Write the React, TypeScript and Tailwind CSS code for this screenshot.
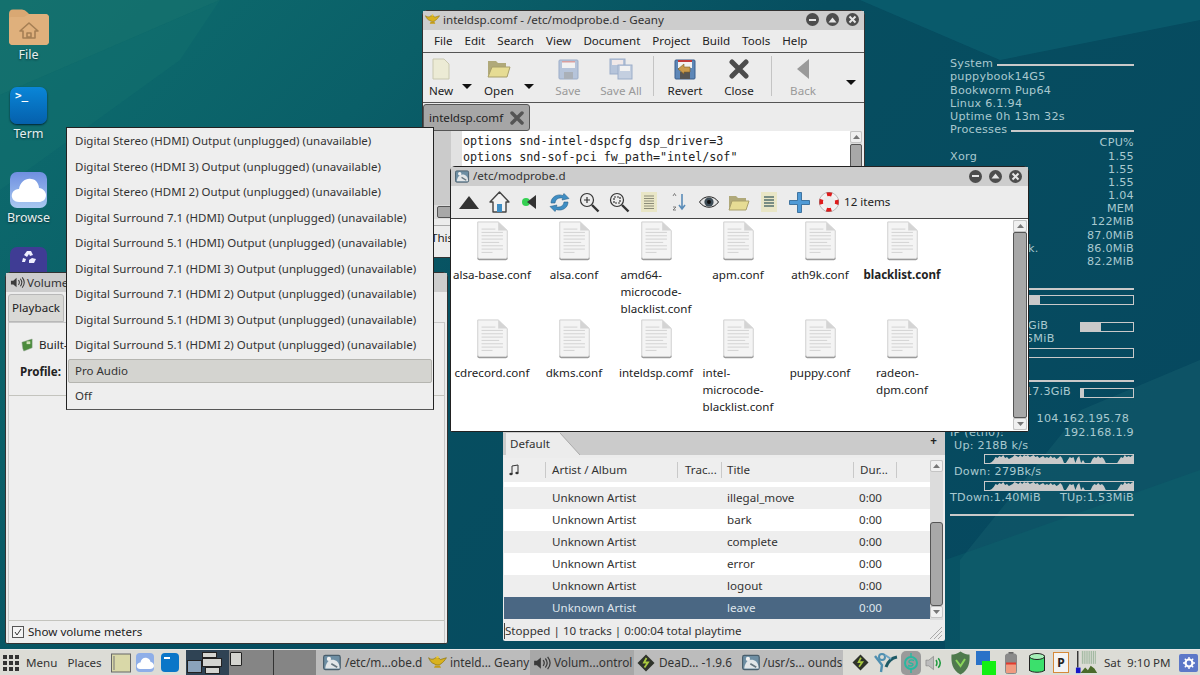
import React from "react";

const ui = "font-['Noto_Sans','Open_Sans',sans-serif]";

function WinButtons() {
  return (
    <div className="flex items-center gap-[7px]">
      <span className="flex h-[13px] w-[13px] items-center justify-center rounded-full bg-[#4d4d4d]">
        <span className="h-[2px] w-[7px] bg-[#e6e6e6]" />
      </span>
      <span className="flex h-[13px] w-[13px] items-center justify-center rounded-full bg-[#4d4d4d]">
        <svg width="9" height="6" viewBox="0 0 9 6">
          <path d="M0.5 5.5 L4.5 0.5 L8.5 5.5 Z" fill="#e6e6e6" />
        </svg>
      </span>
      <span className="flex h-[13px] w-[13px] items-center justify-center rounded-full bg-[#4d4d4d]">
        <svg width="9" height="9" viewBox="0 0 9 9">
          <path d="M1.5 1.5 L7.5 7.5 M7.5 1.5 L1.5 7.5" stroke="#e6e6e6" strokeWidth="2" />
        </svg>
      </span>
    </div>
  );
}

function GeanyLamp({ size = 16 }: { size?: number }) {
  return (
    <svg width={size} height={size} viewBox="0 0 16 16" className="shrink-0">
      <path d="M0.5 4 C3 6 4 5 5 5 C6 3.5 9 3.5 10.5 5.5 L15.5 4 C14 6.5 12.5 8 11 9 C10 10.5 7 10.5 5 9 C3 8.5 1.5 6.5 0.5 4 Z" fill="#d9b21f" stroke="#8c7310" strokeWidth="0.6" />
      <path d="M5 12.5 H11 L10 10.5 H6 Z" fill="#c49c18" />
      <circle cx="8" cy="3.5" r="1" fill="#e8c83a" />
    </svg>
  );
}

function FmIcon({ size = 16 }: { size?: number }) {
  return (
    <svg width={size} height={size} viewBox="0 0 16 16" className="shrink-0">
      <rect x="0.5" y="2" width="14" height="12" rx="1.5" fill="#6d8ea3" stroke="#4a5f6d" />
      <path d="M2 12 C3 7 6 5 10 6 C13 7 14 10 14 13 H2 Z" fill="#e2e6e8" />
      <circle cx="5" cy="5" r="1.8" fill="#f1f1f1" />
      <path d="M7 9 L12 12" stroke="#66767f" strokeWidth="1.4" />
    </svg>
  );
}

function SpeakerIcon({ size = 16 }: { size?: number }) {
  return (
    <svg width={size} height={size} viewBox="0 0 16 16" fill="none" className="shrink-0">
      <path d="M1 6 H3.5 L7 3 V13 L3.5 10 H1 Z" fill="#3b3b3b" />
      <path d="M9 5.5 C10.2 7 10.2 9 9 10.5 M11 4 C13 6.5 13 9.5 11 12 M13 2.5 C15.8 6 15.8 10 13 13.5" stroke="#3b3b3b" strokeWidth="1.1" />
    </svg>
  );
}

function DeadbeefIcon({ size = 18 }: { size?: number }) {
  return (
    <svg width={size} height={size} viewBox="0 0 18 18" className="shrink-0">
      <path d="M9 0.5 L17.5 9 L9 17.5 L0.5 9 Z" fill="#2f332b" />
      <path d="M9.5 4 L7 8.5 H11 L7.5 13.5" stroke="#a9c93f" strokeWidth="1.8" fill="none" />
    </svg>
  );
}

function DocIcon() {
  return (
    <svg width="33" height="40" viewBox="0 0 34 42">
      <path d="M1.5 1 H23 L32.5 10 V38 Q32.5 39.5 31 39.5 H3 Q1.5 39.5 1.5 38 Z" fill="#f4f4f4" stroke="#cfcfcf" />
      <path d="M1.5 38.5 Q1.5 40.5 3 40.5 H31 Q32.5 40.5 32.5 38.5" fill="none" stroke="#9a9a9a" strokeWidth="1.2" />
      <path d="M23 1 V10 H32.5 Z" fill="#d4d4d4" />
      <path d="M5.5 8.5 H20 M5.5 12 H28 M5.5 15.5 H28 M5.5 19 H28 M5.5 22.5 H24 M5.5 26 H28 M5.5 29.5 H28 M5.5 33 H17" stroke="#d2d2d2" strokeWidth="1" />
    </svg>
  );
}

function ScrollUp() {
  return (
    <div className="flex h-[12px] shrink-0 items-center justify-center rounded-[2px] border border-[#c4c4c4] bg-[#f0f0f0]">
      <svg width="7" height="4" viewBox="0 0 7 4">
        <path d="M0 4 L3.5 0 L7 4 Z" fill="#777" />
      </svg>
    </div>
  );
}

function ScrollDown() {
  return (
    <div className="flex h-[12px] shrink-0 items-center justify-center rounded-[2px] border border-[#c4c4c4] bg-[#f0f0f0]">
      <svg width="7" height="4" viewBox="0 0 7 4">
        <path d="M0 0 L3.5 4 L7 0 Z" fill="#777" />
      </svg>
    </div>
  );
}

function Desktop() {
  return (
    <div className="absolute left-0 top-0 flex w-[57px] flex-col items-center text-[12.5px] text-[#e6f0f0] [text-shadow:0_1px_2px_#0a3036] font-['Noto_Sans',sans-serif]">
      <svg className="mt-[8px]" width="42" height="38" viewBox="0 0 42 38">
        <path d="M1 6 Q1 1.5 5 1.5 H14 Q17 1.5 19 4 L21 6 H37 Q41 6 41 10 V33 Q41 37 37 37 H5 Q1 37 1 33 Z" fill="#d9a873" />
        <path d="M1 11 Q1 9 3 9 H16 L21 6 H37 Q41 6 41 10 V33 Q41 37 37 37 H5 Q1 37 1 33 Z" fill="#dfb07c" />
        <path d="M21 15 L12 23 H15 V30 H27 V23 H30 Z M19 25 H23 V29 H19 Z" fill="none" stroke="#a57f54" strokeWidth="1.6" strokeLinejoin="round" />
      </svg>
      <span className="leading-[18px]">File</span>
      <span className="mt-[23px] flex h-[37px] w-[37px] rounded-[7px] bg-gradient-to-b from-[#0a86d8] to-[#0560ac] shadow-[0_1px_2px_#023]">
        <span className="ml-[5px] mt-[2px] font-['DejaVu_Sans_Mono',monospace] text-[11px] font-bold leading-[14px] text-white [text-shadow:none]">&gt;_</span>
      </span>
      <span className="mt-[1px] leading-[18px]">Term</span>
      <span className="mt-[29px] flex h-[36px] w-[37px] items-center justify-center rounded-[7px] bg-gradient-to-b from-[#6f8fe0] to-[#a9c8f0]">
        <svg width="35" height="28" viewBox="0 0 35 28">
          <path d="M8 26 C2 26 0 21 1 18 C2 14 6 13 8 13 C9 6 15 2 20 3 C25 3 28 8 28 12 C32 12 35 16 35 19 C35 24 31 26 28 26 Z" fill="#fff" />
        </svg>
      </span>
      <span className="mt-[1px] leading-[18px]">Browse</span>
      <span className="mt-[20px] flex h-[37px] w-[37px] justify-center rounded-[7px] bg-[#3f3c94]">
        <svg className="mt-[3px]" width="16" height="14" viewBox="0 0 16 14">
          <path d="M6 1 H10 L12 5 L9 6 L8 4 L6 7 L3 5 Z M2 8 L5 9 L4 12 H1 Z M11 8 L15 9 L13 13 H8 V10 Z" fill="#eef" />
        </svg>
      </span>
    </div>
  );
}

function Rule({ label }: { label: string }) {
  return (
    <div className="flex h-[13.2px] items-center gap-[4px]">
      <span>{label}</span>
      <span className="h-[2px] flex-1 bg-[#c9c9c9]" />
    </div>
  );
}

function Row({ left, right }: { left?: string; right?: string }) {
  return (
    <div className="flex h-[13.2px] items-center justify-between">
      <span>{left}</span>
      <span>{right}</span>
    </div>
  );
}

const graphHeights = [0,0,1,3,6,5,7,6,8,5,6,4,5,6,8,7,6,8,6,8,7,8,6,7,8,6,7,5,6,7,5,6,5,7,5,6,4,5,7,5,0,0,3,6,5,6,0,5,7,0,3,0,0,0,0,4,6,5,7,5,6,4,0,0,0,0,0,0,0,3,6,5,8,6,7,6,8,5];

function NetGraph() {
  return (
    <div className="ml-[34px] h-[10px] border border-[#c9c9c9]">
      <svg width="148" height="8" viewBox="0 0 148 8" className="block">
        <path d={"M3 8 " + graphHeights.map((h, i) => `L${i * 1.9 + 3} ${8 - h}`).join(" ") + " L148 8 Z"} fill="#c9c9c9" />
      </svg>
    </div>
  );
}

function Conky() {
  return (
    <div className="absolute left-[950px] top-[58px] flex w-[184px] flex-col font-['DejaVu_Sans',sans-serif] text-[11.2px] tracking-[0.25px] text-[#a9c9cf]">
      <Rule label="System" />
      <Row left="puppybook14G5" />
      <Row left="Bookworm Pup64" />
      <Row left="Linux 6.1.94" />
      <Row left="Uptime 0h 13m 32s" />
      <Rule label="Processes" />
      <Row right="CPU%" />
      <Row left="Xorg" right="1.55" />
      <Row right="1.55" />
      <Row right="1.55" />
      <Row right="1.04" />
      <Row right="MEM" />
      <Row right="122MiB" />
      <Row right="87.0MiB" />
      <div className="flex h-[13.2px] items-center justify-between pl-[78px]">
        <span>k.</span>
        <span>86.0MiB</span>
      </div>
      <Row right="82.2MiB" />
      <div className="mt-[19px] h-[2px] bg-[#c9c9c9]" />
      <div className="mt-[5px] h-[10px] border border-[#c9c9c9]">
        <div className="h-full w-[89px] bg-[#c9c9c9]" />
      </div>
      <div className="mt-[15px] flex h-[13.2px] items-center pl-[78px]">
        <span className="w-[52px]">GiB</span>
        <span className="h-[10px] w-[54px] border border-[#c9c9c9]">
          <span className="block h-full w-[20px] bg-[#c9c9c9]" />
        </span>
      </div>
      <div className="flex h-[13.2px] items-center pl-[76px]">5MiB</div>
      <div className="mt-[1.6px] h-[10px] border border-[#c9c9c9]" />
      <div className="mt-[22px] h-[2px] bg-[#c9c9c9]" />
      <div className="mt-[5.8px] flex h-[10px] items-center">
        <span className="flex w-[130px] justify-end pr-[9px]">17.3GiB</span>
        <span className="h-[10px] w-[54px] border border-[#c9c9c9]">
          <span className="block h-full w-[3px] bg-[#c9c9c9]" />
        </span>
      </div>
      <div className="mt-[15.4px] flex h-[13.2px] items-center justify-end pr-[5px]">104.162.195.78</div>
      <Row left="IP (eth0):" right="192.168.1.9" />
      <div className="ml-[4px] flex h-[13.2px] items-center">Up: 218B k/s</div>
      <div className="mt-[1px]"><NetGraph /></div>
      <div className="ml-[4px] mt-[2.4px] flex h-[13.2px] items-center">Down: 279Bk/s</div>
      <div className="mt-[1.4px]"><NetGraph /></div>
      <div className="mt-[1.4px]"><Row left="TDown:1.40MiB" right="TUp:1.53MiB" /></div>
      <div className="mt-[8.4px] h-[2px] bg-[#c9c9c9]" />
    </div>
  );
}

const menuRows = [
  "Digital Stereo (HDMI) Output (unplugged) (unavailable)",
  "Digital Stereo (HDMI 3) Output (unplugged) (unavailable)",
  "Digital Stereo (HDMI 2) Output (unplugged) (unavailable)",
  "Digital Surround 7.1 (HDMI) Output (unplugged) (unavailable)",
  "Digital Surround 5.1 (HDMI) Output (unplugged) (unavailable)",
  "Digital Surround 7.1 (HDMI 3) Output (unplugged) (unavailable)",
  "Digital Surround 7.1 (HDMI 2) Output (unplugged) (unavailable)",
  "Digital Surround 5.1 (HDMI 3) Output (unplugged) (unavailable)",
  "Digital Surround 5.1 (HDMI 2) Output (unplugged) (unavailable)",
];

function ProfileMenu() {
  return (
    <div className={`absolute left-[66px] top-[127px] flex h-[283px] w-[368px] flex-col border border-[#222] border-b-[#555] bg-[#eeeeee] px-[1px] text-[11.5px] text-[#333] ${ui}`}>
      {menuRows.map((r) => (
        <div key={r} className="flex h-[25.5px] items-center whitespace-nowrap pl-[7px]">{r}</div>
      ))}
      <div className="mt-[1.5px] flex h-[24px] items-center rounded-[2px] border border-[#b5b5b0] bg-[#d4d4d0] pl-[6px]">Pro Audio</div>
      <div className="flex h-[26px] items-center pl-[7px]">Off</div>
    </div>
  );
}

function VolumeWindow() {
  return (
    <div className={`absolute left-[5px] top-[272px] flex h-[372px] w-[443px] flex-col rounded-t-[5px] rounded-b-[2px] border border-[#333] bg-[#ececec] text-[11.6px] text-[#222] ${ui}`}>
      <div className="flex h-[19px] shrink-0 items-center gap-[2px] bg-[#cdcdcd] pl-[4px] pr-[3px]">
        <SpeakerIcon size={15} />
        <span className="text-[#333]">Volume</span>
      </div>
      <div className="mx-[2px] flex h-[30px] shrink-0 items-end">
        <div className="flex h-[28px] w-[56px] items-center justify-center rounded-t-[3px] border border-[#b8b8b8] bg-[#d9d9d6]">Playback</div>
      </div>
      <div className="mx-[2px] flex flex-1 flex-col border-x border-t border-[#c8c8c8] bg-[#eeeeee]">
        <div className="ml-[12px] mt-[13px] flex h-[18px] items-center gap-[5px]">
          <svg width="13" height="15" viewBox="0 0 14 15">
            <path d="M1 4 L12 0.5 V10 L3 13.5 L2 11 Z" fill="#4b8c3c" stroke="#8a9a8a" strokeWidth="0.5" />
            <rect x="6" y="3" width="4" height="3" fill="#cfe2b8" />
          </svg>
          <span>Built-</span>
        </div>
        <div className="ml-[11px] mt-[8px] flex h-[20px] items-center font-bold">Profile:</div>
        <div className="mt-[13px] h-px bg-[#c4c4be]" />
        <div className="flex-1" />
        <div className="h-px bg-[#c4c4be]" />
        <div className="flex h-[22px] items-center gap-[4px] pl-[3px]">
          <span className="flex h-[12px] w-[12px] items-center justify-center border border-[#555] bg-[#f4f4f4]">
            <svg width="8" height="8" viewBox="0 0 8 8">
              <path d="M1 4 L3 7 L7 1" stroke="#333" fill="none" strokeWidth="1" />
            </svg>
          </span>
          <span>Show volume meters</span>
        </div>
      </div>
    </div>
  );
}

function Caret() {
  return <span className="h-0 w-0 border-x-[5px] border-t-[5px] border-x-transparent border-t-[#111]" />;
}

function ToolItem({ label, width, dim, children }: { label: string; width: string; dim?: boolean; children: React.ReactNode }) {
  return (
    <div className={`flex shrink-0 flex-col items-center whitespace-nowrap ${width}`}>
      <div className="flex h-[26px] items-center">{children}</div>
      <span className={`leading-[18px] ${dim ? "text-[#999]" : "text-[#222]"}`}>{label}</span>
    </div>
  );
}

function Floppy() {
  return (
    <svg width="21" height="21" viewBox="0 0 21 21">
      <rect x="1" y="1" width="19" height="19" rx="1" fill="#b6c4da" stroke="#9badc9" />
      <rect x="4" y="2" width="13" height="7" fill="#f2f2f2" />
      <rect x="4" y="2" width="13" height="1.5" fill="#d9a0a0" />
      <rect x="6" y="13" width="9" height="7" fill="#aab0b8" />
    </svg>
  );
}

function GeanyWindow() {
  return (
    <div className={`absolute left-[422px] top-[10px] flex h-[248px] w-[443px] flex-col rounded-t-[5px] border border-[#333] bg-[#ececec] text-[11.6px] text-[#222] ${ui}`}>
      <div className="flex h-[19px] shrink-0 items-center bg-[#cdcdcd] pb-[2px] pl-[2px] pr-[5px]">
        <GeanyLamp size={15} />
        <span className="ml-[3px] flex-1 text-[#333]">inteldsp.comf - /etc/modprobe.d - Geany</span>
        <WinButtons />
      </div>
      <div className="flex h-[23px] shrink-0 items-center gap-[12px] border-b border-[#555] pl-[11px]">
        {["File", "Edit", "Search", "View", "Document", "Project", "Build", "Tools", "Help"].map((m) => (
          <span key={m}>{m}</span>
        ))}
      </div>
      <div className="flex h-[50px] shrink-0 items-start border-b border-[#555] pt-[3px]">
        <ToolItem label="New" width="w-[36px]">
          <svg width="18" height="22" viewBox="0 0 18 22">
            <path d="M1 1 H12 L17 6 V21 H1 Z" fill="#ecebd5" stroke="#c9c8b0" />
          </svg>
        </ToolItem>
        <div className="flex h-[33px] w-[16px] shrink-0 items-end justify-center"><Caret /></div>
        <ToolItem label="Open" width="w-[48px]">
          <svg width="24" height="20" viewBox="0 0 24 20">
            <path d="M1 17 V2 H9 L11 4 H19 V8 H6 Z" fill="#b0a97a" />
            <path d="M1 18 L5 8 H23 L20 18 Z" fill="#e6dc94" stroke="#a89f6a" />
          </svg>
        </ToolItem>
        <div className="flex h-[33px] w-[12px] shrink-0 items-end justify-center"><Caret /></div>
        <ToolItem label="Save" width="w-[66px]" dim><Floppy /></ToolItem>
        <ToolItem label="Save All" width="w-[40px]" dim>
          <svg width="24" height="22" viewBox="0 0 24 22">
            <rect x="1" y="1" width="15" height="15" fill="#b6c4da" stroke="#9badc9" />
            <rect x="3" y="2" width="11" height="5" fill="#f0e8e8" />
            <rect x="9" y="7" width="14" height="14" fill="#c4cfe0" stroke="#9badc9" />
            <rect x="11" y="8" width="10" height="5" fill="#f2f2f2" />
          </svg>
        </ToolItem>
        <span className="ml-[12px] mr-[6px] h-[40px] w-px shrink-0 bg-[#c4c4c4]" />
        <ToolItem label="Revert" width="w-[50px]">
          <svg width="22" height="21" viewBox="0 0 22 21">
            <rect x="1" y="1" width="20" height="19" rx="1" fill="#5d87b8" stroke="#3a5f8d" />
            <rect x="4" y="1" width="14" height="2" fill="#c03a3a" />
            <rect x="4" y="3" width="14" height="6" fill="#f2f2f2" />
            <rect x="6" y="13" width="10" height="7" fill="#555" />
            <path d="M4 10 L10 5 V8 H16 V13 H10 V15 Z" fill="#c99a4d" stroke="#7f5e25" strokeWidth="0.6" />
          </svg>
        </ToolItem>
        <ToolItem label="Close" width="w-[58px]">
          <svg width="20" height="20" viewBox="0 0 20 20">
            <path d="M3 3 L17 17 M17 3 L3 17" stroke="#4c4c4c" strokeWidth="5" strokeLinecap="round" />
          </svg>
        </ToolItem>
        <span className="ml-[3px] h-[40px] w-px shrink-0 bg-[#c4c4c4]" />
        <ToolItem label="Back" width="w-[62px]" dim>
          <svg width="13" height="20" viewBox="0 0 13 20">
            <path d="M12 0 V20 L0 10 Z" fill="#9a9a9a" />
          </svg>
        </ToolItem>
        <span className="flex-1" />
        <div className="flex h-[29px] w-[20px] shrink-0 items-end justify-center"><Caret /></div>
        <span className="w-[3px] shrink-0" />
      </div>
      <div className="flex h-[28px] shrink-0 items-end">
        <div className="flex h-[27px] w-[107px] items-center gap-[7px] rounded-[3px] border border-[#555] bg-[#a6a6a6] pl-[5px]">
          <span>inteldsp.comf</span>
          <svg width="14" height="14" viewBox="0 0 14 14">
            <path d="M2 2 L12 12 M12 2 L2 12" stroke="#555" strokeWidth="3.5" strokeLinecap="round" />
          </svg>
        </div>
      </div>
      <div className="flex min-h-0 flex-1">
        <div className="w-[28px] bg-[#cbcbcb]" />
        <div className="w-[11px] bg-[#e2e2e2]" />
        <div className="flex-1 bg-white pl-px pt-[2px] font-['DejaVu_Sans_Mono',monospace] text-[11.7px] leading-[16.4px] text-[#222]">
          <div>options snd-intel-dspcfg dsp_driver=3</div>
          <div>options snd-sof-pci fw_path="intel/sof"</div>
        </div>
        <div className="mr-[2px] flex w-[12px] flex-col bg-[#dcdcdc]">
          <ScrollUp />
          <div className="mt-px h-[24px] rounded-[2px] border border-[#555] bg-[#a8a8a8]" />
        </div>
      </div>
      <div className="flex h-[14px] shrink-0 items-center bg-[#dcdcdc]">
        <div className="ml-[14px] h-[12px] w-[60px] rounded-[2px] border border-[#555] bg-[#a8a8a8]" />
      </div>
      <div className="mt-[6px] flex h-[32px] shrink-0 items-start border-t border-[#aaa] pl-[8px] pt-[3px]">This is Geany</div>
    </div>
  );
}

const fmFiles = [
  ["alsa-base.conf"],
  ["alsa.conf"],
  ["amd64-", "microcode-", "blacklist.conf"],
  ["apm.conf"],
  ["ath9k.conf"],
  ["blacklist.conf"],
  ["cdrecord.conf"],
  ["dkms.conf"],
  ["inteldsp.comf"],
  ["intel-", "microcode-", "blacklist.conf"],
  ["puppy.conf"],
  ["radeon-", "dpm.conf"],
];

function FmTool({ children }: { children: React.ReactNode }) {
  return <div className="flex w-[30px] shrink-0 items-center justify-center">{children}</div>;
}

function FileManager() {
  return (
    <div className={`absolute left-[450px] top-[166px] flex h-[266px] w-[579px] flex-col rounded-t-[5px] rounded-b-[2px] border border-[#222] bg-[#ececec] text-[11.6px] text-[#222] ${ui}`}>
      <div className="flex h-[19px] shrink-0 items-center bg-[#cdcdcd] pb-[1px] pl-[4px] pr-[6px]">
        <FmIcon size={15} />
        <span className="ml-[3px] flex-1 text-[#333]">/etc/modprobe.d</span>
        <WinButtons />
      </div>
      <div className="flex h-[33px] shrink-0 items-center border-b border-[#444] pl-[3px]">
        <FmTool>
          <svg width="20" height="13" viewBox="0 0 20 13"><path d="M10 0 L20 13 H0 Z" fill="#333" /></svg>
        </FmTool>
        <FmTool>
          <svg width="21" height="22" viewBox="0 0 21 22">
            <path d="M10.5 1 L1 11 H4 V21 H17 V11 H20 Z" fill="#f2f2f2" stroke="#444" strokeWidth="1.4" strokeLinejoin="round" />
            <rect x="8" y="13" width="5" height="8" fill="#3f8ec4" />
          </svg>
        </FmTool>
        <FmTool>
          <svg width="16" height="16" viewBox="0 0 16 16">
            <circle cx="5" cy="8" r="4" fill="#35d052" />
            <path d="M15 1 V15 L6 8 Z" fill="#333" />
          </svg>
        </FmTool>
        <FmTool>
          <svg width="21" height="21" viewBox="0 0 21 21" fill="none">
            <path d="M2 11 C2 5 8 1.5 14 3.5 L15 1.5 L20 6.5 L13 8 L13.8 6.3 C10 5 6.5 7 6 11 Z" fill="#3f8ec4" stroke="#29628a" strokeWidth="0.6" />
            <path d="M19 10 C19 16 13 19.5 7 17.5 L6 19.5 L1 14.5 L8 13 L7.2 14.7 C11 16 14.5 14 15 10 Z" fill="#3f8ec4" stroke="#29628a" strokeWidth="0.6" />
          </svg>
        </FmTool>
        <FmTool>
          <svg width="21" height="21" viewBox="0 0 21 21" fill="none">
            <circle cx="8" cy="8" r="6.5" stroke="#333" strokeWidth="1.2" />
            <path d="M8 5 V11 M5 8 H11" stroke="#333" strokeWidth="1.2" />
            <path d="M13 13 L19.5 19.5" stroke="#333" strokeWidth="2.4" />
          </svg>
        </FmTool>
        <FmTool>
          <svg width="21" height="21" viewBox="0 0 21 21" fill="none">
            <circle cx="8" cy="8" r="6.5" stroke="#333" strokeWidth="1.2" />
            <rect x="5" y="5" width="6" height="6" stroke="#333" strokeWidth="1.2" strokeDasharray="2 1" />
            <path d="M13 13 L19.5 19.5" stroke="#333" strokeWidth="2.4" />
          </svg>
        </FmTool>
        <FmTool>
          <svg width="16" height="20" viewBox="0 0 16 20">
            <rect width="16" height="20" fill="#e9e6c6" />
            <path d="M3 4 H13 M3 6.5 H13 M3 9 H13 M3 11.5 H13 M3 14 H13 M3 16.5 H13" stroke="#8c8c78" />
          </svg>
        </FmTool>
        <FmTool>
          <svg width="14" height="18" viewBox="0 0 14 18">
            <path d="M10 1 V15 M7 12 L10 16 L13 12" stroke="#5a8cb8" strokeWidth="1.6" fill="none" />
            <path d="M1 3 L2.5 0.5 L4 3 M1 14 H4 L1 17 H4" stroke="#666" strokeWidth="0.8" fill="none" />
          </svg>
        </FmTool>
        <FmTool>
          <svg width="20" height="14" viewBox="0 0 20 14">
            <path d="M0.5 7 C5 0 15 0 19.5 7 C15 14 5 14 0.5 7 Z" fill="#e4e4e4" stroke="#222" />
            <circle cx="10" cy="7" r="4.6" fill="#3c4b55" />
            <circle cx="10" cy="7" r="2" fill="#111" />
          </svg>
        </FmTool>
        <FmTool>
          <svg width="22" height="17" viewBox="0 0 22 17">
            <path d="M1 15 V2 H8 L10 4 H18 V7 H5 Z" fill="#b0a97a" />
            <path d="M1 16 L4 7 H21 L18 16 Z" fill="#e6dc94" stroke="#a89f6a" />
          </svg>
        </FmTool>
        <FmTool>
          <svg width="16" height="20" viewBox="0 0 16 20">
            <rect width="16" height="20" fill="#e9e6c6" />
            <path d="M3 5 H13 M3 8 H13 M3 11 H13 M3 14 H13" stroke="#54706f" strokeWidth="1.4" />
          </svg>
        </FmTool>
        <FmTool>
          <svg width="21" height="21" viewBox="0 0 21 21">
            <path d="M8.5 0.5 H12.5 V8.5 H20.5 V12.5 H12.5 V20.5 H8.5 V12.5 H0.5 V8.5 H8.5 Z" fill="#4f9ad6" stroke="#27608f" strokeWidth="0.8" />
          </svg>
        </FmTool>
        <FmTool>
          <svg width="20" height="20" viewBox="0 0 20 20" fill="none">
            <circle cx="10" cy="10" r="8" stroke="#f2f2f2" strokeWidth="4" />
            <circle cx="10" cy="10" r="8" stroke="#e01a1a" strokeWidth="4" strokeDasharray="5 7.6" strokeDashoffset="2.5" />
            <circle cx="10" cy="10" r="9.7" stroke="#888" strokeWidth="0.5" />
          </svg>
        </FmTool>
        <span className="whitespace-nowrap">12 items</span>
      </div>
      <div className="flex min-h-0 flex-1 bg-white">
        <div className="grid flex-1 grid-cols-[repeat(6,82px)] grid-rows-[98px_98px] content-start pt-[2px]">
          {fmFiles.map((lines, i) => (
            <div key={i} className={`flex flex-col items-center ${i === 5 ? "font-bold" : ""}`}>
              <DocIcon />
              <div className="mt-[5px] flex flex-col whitespace-nowrap leading-[17px]">
                {lines.map((l) => <span key={l}>{l}</span>)}
              </div>
            </div>
          ))}
        </div>
        <div className="my-[1px] mr-[1px] flex w-[14px] flex-col bg-[#dcdcdc]">
          <ScrollUp />
          <div className="flex-1 rounded-[2px] border border-[#555] bg-[#a8a8a8]" />
          <ScrollDown />
        </div>
      </div>
    </div>
  );
}

const tracks = ["illegal_move", "bark", "complete", "error", "logout", "leave"];

function PlayerWindow() {
  return (
    <div className={`absolute left-[503px] top-[430px] flex h-[211px] w-[442px] flex-col rounded-b-[2px] bg-[#ececec] text-[11.6px] text-[#333] ${ui}`}>
      <div className="relative flex h-[25px] shrink-0 items-end bg-[#cbcbcb] pl-[3px]">
        <div className="flex h-[22px] w-[54px] items-center bg-[#ececec] pl-[4px]">Default</div>
        <svg width="20" height="22" viewBox="0 0 20 22" className="block">
          <path d="M0 0 L20 22 H0 Z" fill="#ececec" />
          <path d="M0 0 L20 22" stroke="#aaa" fill="none" />
        </svg>
        <span className="absolute right-[8px] top-[2px] font-bold text-[#222]">+</span>
      </div>
      <div className="flex min-h-0 flex-1 pl-[1px] pt-[3px]">
        <div className="flex min-w-0 flex-1 flex-col">
          <div className="flex h-[24px] shrink-0 items-center bg-[#eeeeee]">
            <div className="flex h-[16px] w-[42px] items-center border-r border-[#c9c9c9] pl-[5px]">
              <svg width="11" height="12" viewBox="0 0 11 12">
                <path d="M3 10 V2 L9 1 V8.5" stroke="#333" fill="none" strokeWidth="1" />
                <ellipse cx="2" cy="10" rx="1.7" ry="1.3" fill="#333" />
                <ellipse cx="8" cy="9" rx="1.7" ry="1.3" fill="#333" />
              </svg>
            </div>
            <div className="flex h-[16px] w-[132px] items-center border-r border-[#c9c9c9] pl-[6px]">Artist / Album</div>
            <div className="flex h-[16px] w-[44px] items-center border-r border-[#c9c9c9] pl-[7px]">Trac...</div>
            <div className="flex h-[16px] w-[132px] items-center border-r border-[#c9c9c9] pl-[5px]">Title</div>
            <div className="flex h-[16px] w-[43px] items-center border-r border-[#c9c9c9] pl-[6px]">Dur...</div>
          </div>
          <div className="h-[5px] shrink-0 bg-white" />
          {tracks.map((t, i) => (
            <div key={t} className={`flex h-[22px] shrink-0 items-center ${i === 5 ? "bg-[#4a6783] text-[#dfe6ec]" : i % 2 === 0 ? "bg-[#eeeeee]" : "bg-white"}`}>
              <span className="w-[48px]" />
              <span className="w-[175px]">Unknown Artist</span>
              <span className="w-[132px]">{t}</span>
              <span>0:00</span>
            </div>
          ))}
        </div>
        <div className="mr-[2px] mt-[2px] flex w-[13px] flex-col bg-[#dcdcdc]">
          <ScrollUp />
          <div className="h-[50px] shrink-0" />
          <div className="h-[84px] shrink-0 rounded-[3px] border border-[#555] bg-[#a8a8a8]" />
          <ScrollDown />
        </div>
      </div>
      <div className="relative flex h-[21px] shrink-0 items-center pl-[1px]">
        <span className="border-l border-[#444] leading-[16px]">Stopped | 10 tracks | 0:00:04 total playtime</span>
        <svg className="absolute bottom-[1px] right-[2px]" width="14" height="14" viewBox="0 0 14 14">
          <path d="M13 1 L1 13 M13 5 L5 13 M13 9 L9 13" stroke="#aaa" />
        </svg>
      </div>
    </div>
  );
}

function Taskbar() {
  return (
    <div className={`flex h-[26px] w-full items-stretch border-t border-[#e8e8e8] bg-[#dcdcd6] text-[11.6px] text-[#333] ${ui}`}>
      <div className="flex w-[186px] shrink-0 items-center pl-[3px]">
        <svg width="16" height="16" viewBox="0 0 16 16">
          <path d="M0 0h4v4H0zM6 0h4v4H6zM12 0h4v4h-4zM0 6h4v4H0zM6 6h4v4H6zM12 6h4v4h-4zM0 12h4v4H0zM6 12h4v4h-4zM12 12h4v4h-4z" fill="#333" />
        </svg>
        <span className="ml-[7px]">Menu</span>
        <span className="ml-[10px]">Places</span>
        <svg className="ml-[9px]" width="20" height="20" viewBox="0 0 20 20">
          <rect x="0.5" y="1" width="19" height="18" fill="#d9d8a8" stroke="#666" />
          <path d="M3 3 V17" stroke="#777" />
        </svg>
        <svg className="ml-[5px]" width="18" height="19" viewBox="0 0 18 19">
          <rect width="18" height="19" rx="4" fill="#8eaee8" />
          <path d="M4 16 C1 16 0 13 1.5 11 C2.5 9.5 4 9.5 4.5 9.5 C5 6 8 4 11 5 C13.5 5.5 14.5 8 14.5 9 C16.5 9 18 11 18 13 C18 15 16 16 14 16 Z" fill="#fff" />
        </svg>
        <span className="ml-[7px] flex h-[19px] w-[18px] rounded-[4px] bg-[#0a76c8]">
          <span className="ml-[3px] mt-[4px] h-[2px] w-[6px] bg-white" />
        </span>
      </div>
      <div className="relative w-[43px] shrink-0 bg-[#2f4354]">
        <div className="flex h-full flex-col items-end pr-[7px] pt-[2px]">
          <span className="mr-[5px] h-[6px] w-[15px] border border-[#222] bg-[#d4d4d0]" />
          <span className="h-[9px] w-[20px] border border-[#222] bg-[#d4d4d0]" />
          <span className="mr-[2px] h-[7px] w-[15px] border border-[#222] bg-[#d4d4d0]" />
        </div>
        <span className="absolute bottom-[2px] left-[1px] h-[13px] w-[15px] border border-[#222] bg-[#8ba3bb]" />
      </div>
      <div className="flex w-[87px] shrink-0 bg-[#858585]">
        <span className="ml-[1px] mt-[2px] h-[14px] w-[12px] rounded-[1px] border border-[#222] bg-[#d4d4d0]" />
        <span className="ml-[31px] h-full w-px bg-[#333]" />
      </div>
      <div className="flex w-[214px] shrink-0 items-center bg-[#bcbcbc] pl-[7px] text-[11.8px]">
        <FmIcon size={19} />
        <span className="ml-[3px] w-[83px] whitespace-nowrap">/etc/m...obe.d</span>
        <GeanyLamp size={19} />
        <span className="ml-[3px] whitespace-nowrap">inteld... Geany</span>
      </div>
      <div className="flex w-[104px] shrink-0 items-center bg-[#a8a8a8] pl-[3px] text-[11.8px]">
        <SpeakerIcon size={18} />
        <span className="ml-[3px] whitespace-nowrap">Volum...ontrol</span>
      </div>
      <div className="flex w-[209px] shrink-0 items-center bg-[#bcbcbc] pl-[3px] text-[11.8px]">
        <DeadbeefIcon />
        <span className="ml-[4px] w-[83px] whitespace-nowrap">DeaD... -1.9.6</span>
        <FmIcon size={19} />
        <span className="ml-[2px] whitespace-nowrap">/usr/s... ounds</span>
      </div>
      <div className="flex flex-1 items-center pl-[9px]">
        <DeadbeefIcon size={17} />
        <svg className="ml-[5px]" width="24" height="20" viewBox="0 0 24 20" fill="none">
          <path d="M1 3 L8 12 L7 19" stroke="#4f8fb0" strokeWidth="2.4" />
          <circle cx="8" cy="4" r="3" stroke="#4f8fb0" strokeWidth="2" />
          <path d="M12 14 C14 8 18 5 23 4" stroke="#1d5a66" strokeWidth="3" />
          <path d="M11 2 L17 6" stroke="#6fa5c4" strokeWidth="2" />
        </svg>
        <span className="ml-[3px] flex h-[24px] w-[20px] items-center justify-center rounded-[5px] bg-[#9a9a9a]">
          <svg width="16" height="20" viewBox="0 0 16 20" fill="none">
            <circle cx="8" cy="10" r="6" stroke="#29b8a0" strokeWidth="2" />
            <path d="M8 0 V4 M8 16 V20 M11 7.5 C8 6 5.5 7.5 6 9 C6.5 10.5 10 10 10 11.5 C10 13 7 13.5 5 12.5" stroke="#29b8a0" strokeWidth="1.4" />
          </svg>
        </span>
        <svg className="ml-[4px]" width="18" height="18" viewBox="0 0 19 18" fill="none">
          <path d="M1 6 H4 L9 2 V16 L4 12 H1 Z" fill="#bdbdbd" stroke="#777" strokeWidth="0.6" />
          <path d="M11.5 6 C13 7.5 13 10.5 11.5 12 M14 4 C16.5 7 16.5 11 14 14" stroke="#1e9a3e" strokeWidth="1.6" />
        </svg>
        <svg className="ml-[8px]" width="19" height="24" viewBox="0 0 19 24">
          <path d="M9.5 0.5 C13 3 16 3.5 18.5 3.5 C19 11 18 19 9.5 23.5 C1 19 0 11 0.5 3.5 C3 3.5 6 3 9.5 0.5 Z" fill="#4f7a4d" />
          <path d="M5 9 L9.5 15 L14 8" stroke="#8ad65a" strokeWidth="2" fill="none" />
        </svg>
        <svg className="ml-[6px]" width="20" height="24" viewBox="0 0 20 24">
          <rect x="0" y="0" width="14" height="14" fill="#2a72c8" />
          <rect x="6" y="10" width="14" height="14" fill="#13f013" />
        </svg>
        <svg className="ml-[9px]" width="12" height="22" viewBox="0 0 12 22">
          <rect x="3.5" y="0" width="5" height="2" fill="#666" />
          <rect x="0.5" y="2" width="11" height="19.5" rx="2" fill="#8b8b8b" stroke="#888" />
          <rect x="1" y="12" width="10" height="9" rx="1" fill="#f09a80" />
          <rect x="1" y="10.5" width="10" height="2" fill="#e23b2e" />
        </svg>
        <svg className="ml-[12px]" width="16" height="20" viewBox="0 0 16 20">
          <rect x="0.5" y="3" width="15" height="14.5" fill="#3be06c" stroke="#222" />
          <ellipse cx="8" cy="3.5" rx="7.5" ry="3" fill="#a6f0b8" stroke="#222" />
          <path d="M0.5 17 C2 20 14 20 15.5 17" fill="#3be06c" stroke="#222" />
        </svg>
        <span className="ml-[8px] flex h-[21px] w-[16px] items-center justify-center border border-[#d68a3a] bg-[#f4f4f4] text-[12px] font-bold leading-none text-[#222]">P</span>
        <svg className="ml-[6px]" width="24" height="25" viewBox="0 0 26 25">
          <path d="M3 0 V18" stroke="#222" strokeWidth="1.4" />
          <rect x="1" y="18" width="5" height="6" fill="#1616c8" />
          <path d="M8 0 V14 M10 0 V14 M12 0 V14 M14 0 V14 M16 0 V14 M18 0 V14 M20 0 V14 M22 0 V14" stroke="#9ab59a" strokeWidth="1" />
          <path d="M6 24 L11 18 L14 21 L17 16 L21 19 L24 24 Z" fill="#4a6a2a" />
        </svg>
        <span className="ml-[5px] w-[66px] whitespace-pre">Sat  9:10 PM</span>
        <span className="ml-[9px] flex h-[18px] w-[19px] items-center justify-center rounded-[2px] bg-[#5c78c8]">
          <svg width="12" height="12" viewBox="0 0 12 12">
            <circle cx="6" cy="6" r="3.5" fill="none" stroke="#fff" strokeWidth="2.2" />
            <path d="M6 0 V2 M6 10 V12 M0 6 H2 M10 6 H12 M1.8 1.8 L3 3 M9 9 L10.2 10.2 M1.8 10.2 L3 9 M9 3 L10.2 1.8" stroke="#fff" strokeWidth="1.4" />
          </svg>
        </span>
      </div>
    </div>
  );
}

export default function App() {
  return (
    <div className="flex h-[675px] w-[1200px] flex-col overflow-hidden bg-[#064a60]">
      <div className="relative min-h-0 flex-1 overflow-hidden bg-[linear-gradient(135deg,#0e6e6e_0%,#0a5f68_25%,#064e60_45%,#06475f_100%)]">
        <svg className="absolute inset-0" width="1200" height="649" viewBox="0 0 1200 649">
          <path d="M0 0 H220 L0 95 Z" fill="#1a7570" opacity="0.55" />
          <path d="M0 95 L220 0 L180 60 L0 190 Z" fill="#12706e" opacity="0.5" />
          <path d="M860 0 H1200 V20 L1000 60 Z" fill="#0b6070" opacity="0.7" />
          <path d="M1081 410 L1200 360 V649 H960 L960 560 Z" fill="#11586a" opacity="0.7" />
          <path d="M945 560 L1200 470 V649 H945 Z" fill="#0e6a72" opacity="0.3" />
        </svg>
        <Desktop />
        <Conky />
        <GeanyWindow />
        <PlayerWindow />
        <VolumeWindow />
        <FileManager />
        <ProfileMenu />
      </div>
      <Taskbar />
    </div>
  );
}
